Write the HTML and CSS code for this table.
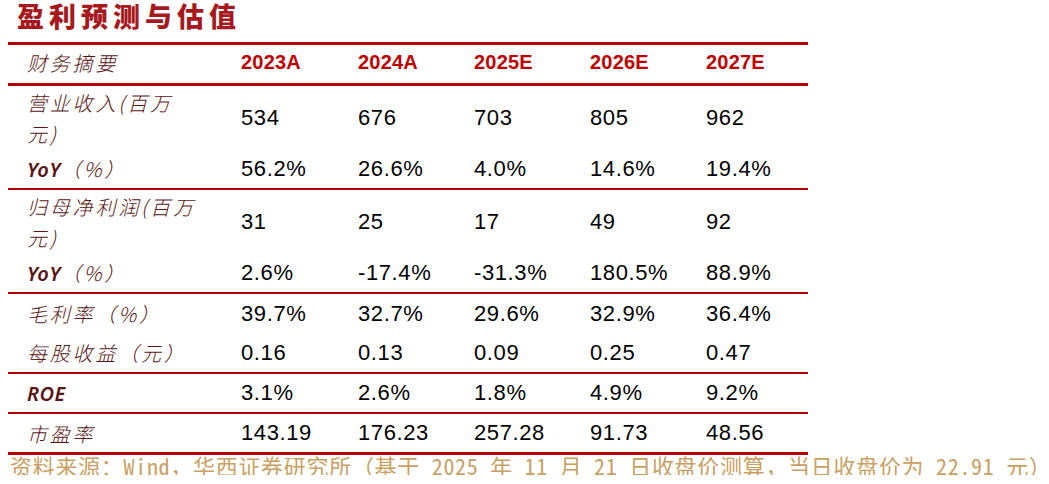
FILE: index.html
```html
<!DOCTYPE html>
<html lang="zh-CN">
<head>
<meta charset="utf-8">
<title>盈利预测与估值</title>
<link rel="stylesheet" href="styles.css">
</head>
<body>
<div class="page">
  <h1 class="title">盈利预测与估值</h1>
  <table class="fin">
    <colgroup>
      <col class="c-label"><col class="c-v1"><col class="c-v"><col class="c-v"><col class="c-v"><col class="c-vlast">
    </colgroup>
    <thead>
      <tr class="head-row">
        <th class="label">财务摘要</th>
        <th class="year">2023A</th>
        <th class="year">2024A</th>
        <th class="year">2025E</th>
        <th class="year">2026E</th>
        <th class="year">2027E</th>
      </tr>
    </thead>
    <tbody class="grp">
      <tr class="row-tall">
        <td class="label">营业收入(百万<br>元)</td>
        <td class="val">534</td><td class="val">676</td><td class="val">703</td><td class="val">805</td><td class="val">962</td>
      </tr>
      <tr class="row">
        <td class="label"><span class="lat">YoY</span>（%）</td>
        <td class="val">56.2%</td><td class="val">26.6%</td><td class="val">4.0%</td><td class="val">14.6%</td><td class="val">19.4%</td>
      </tr>
    </tbody>
    <tbody class="grp">
      <tr class="row-tall">
        <td class="label">归母净利润(百万<br>元)</td>
        <td class="val">31</td><td class="val">25</td><td class="val">17</td><td class="val">49</td><td class="val">92</td>
      </tr>
      <tr class="row">
        <td class="label"><span class="lat">YoY</span>（%）</td>
        <td class="val">2.6%</td><td class="val">-17.4%</td><td class="val">-31.3%</td><td class="val">180.5%</td><td class="val">88.9%</td>
      </tr>
    </tbody>
    <tbody class="grp">
      <tr class="row row-mid">
        <td class="label">毛利率（%）</td>
        <td class="val">39.7%</td><td class="val">32.7%</td><td class="val">29.6%</td><td class="val">32.9%</td><td class="val">36.4%</td>
      </tr>
      <tr class="row row-mid">
        <td class="label">每股收益（元）</td>
        <td class="val">0.16</td><td class="val">0.13</td><td class="val">0.09</td><td class="val">0.25</td><td class="val">0.47</td>
      </tr>
    </tbody>
    <tbody class="grp">
      <tr class="row">
        <td class="label"><span class="lat">ROE</span></td>
        <td class="val">3.1%</td><td class="val">2.6%</td><td class="val">1.8%</td><td class="val">4.9%</td><td class="val">9.2%</td>
      </tr>
    </tbody>
    <tbody class="grp last">
      <tr class="row">
        <td class="label">市盈率</td>
        <td class="val">143.19</td><td class="val">176.23</td><td class="val">257.28</td><td class="val">91.73</td><td class="val">48.56</td>
      </tr>
    </tbody>
  </table>
  <p class="source">资料来源：Wind，华西证券研究所（基于 2025 年 11 月 21 日收盘价测算，当日收盘价为 22.91 元）</p>
</div>
</body>
</html>
```

FILE: styles.css
```css
html, body {
  margin: 0;
  padding: 0;
  background: #ffffff;
}

.page {
  width: 1049px;
}

.title {
  margin: 0;
  padding: 0 0 0 17px;
  height: 42px;
  line-height: 32px;
  font-family: "Noto Sans CJK SC", sans-serif;
  font-size: 27px;
  font-weight: 800;
  letter-spacing: 5px;
  color: #a8191e;
}

.fin {
  margin-left: 8px;
  width: 800px;
  border-collapse: collapse;
  table-layout: fixed;
}

.c-label { width: 225px; }
.c-v1 { width: 117px; }
.c-v { width: 116px; }
.c-vlast { width: 110px; }

.fin th, .fin td {
  padding: 0;
  text-align: left;
  vertical-align: middle;
  white-space: nowrap;
}

.head-row {
  border-top: 3px solid #b40000;
  border-bottom: 3px solid #b40000;
}

.head-row th {
  height: 34px;
  padding-bottom: 4px;
}

.label {
  padding-left: 19px !important;
  font-family: "Noto Sans CJK SC", sans-serif;
  font-style: italic;
  font-weight: 300;
  font-size: 20px;
  letter-spacing: 2.8px;
  color: #5a1414;
  line-height: 31px;
}

.lat {
  font-family: "Noto Sans", sans-serif;
  font-weight: 600;
  letter-spacing: 0.5px;
}

.year {
  padding-left: 8px !important;
  font-family: "Liberation Sans", Arial, sans-serif;
  font-weight: 700;
  font-size: 20px;
  letter-spacing: 0.2px;
  color: #c00000;
}

.val {
  padding-left: 8px !important;
  font-family: "Liberation Sans", Arial, sans-serif;
  font-size: 22px;
  letter-spacing: 0.6px;
  color: #000000;
}

.grp {
  border-bottom: 2px solid #b40000;
}

.grp.last {
  border-bottom: 3px solid #b40000;
}

.row-tall td {
  height: 64px;
}

.row td {
  height: 38px;
}

.row-mid td {
  height: 39px;
}

.source {
  margin: 0;
  padding-left: 10px;
  font-family: "Noto Sans Mono CJK SC", "Noto Sans CJK SC", monospace;
  font-size: 22px;
  line-height: 20px;
  letter-spacing: 0.7px;
  color: #c9a063;
  white-space: nowrap;
}
```
